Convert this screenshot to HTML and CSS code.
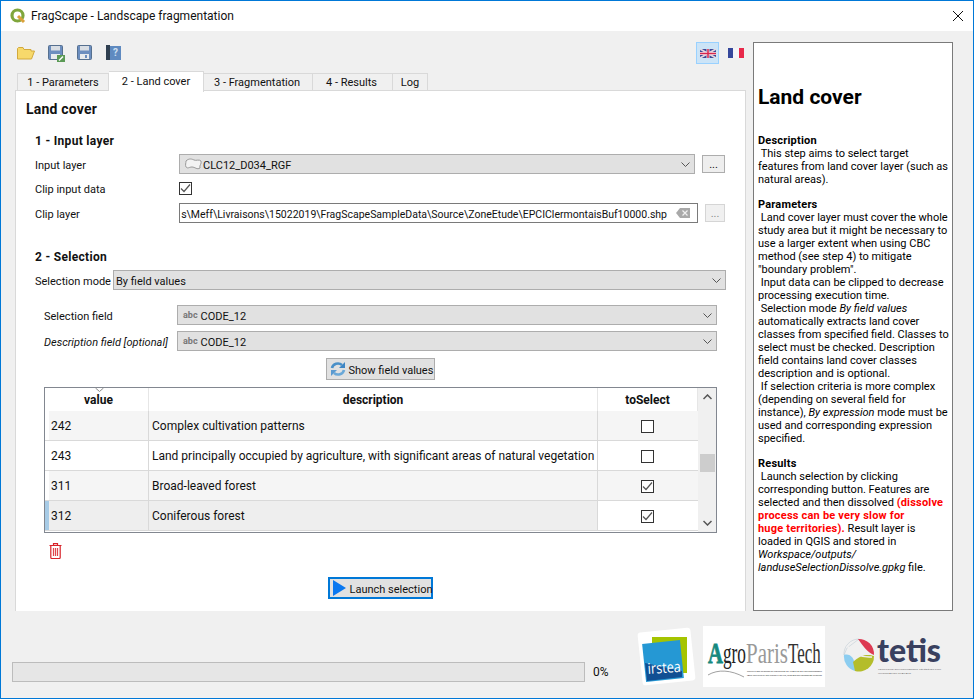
FILE: index.html
```html
<!DOCTYPE html>
<html>
<head>
    <title>FragScape - Landscape fragmentation</title>
    <link rel="stylesheet" href="styles.css">
</head>
<body>
    <div class="window">
        <div class="titlebar">
            <svg class="app-icon" width="16" height="16" viewBox="0 0 16 16">
                <circle cx="7.5" cy="7.5" r="5.500" fill="none" stroke="#7fa63c" stroke-width="3.200"/>
                <path d="M8 8l6 6" stroke="#d9a13b" stroke-width="3"/>
            </svg>
            <span class="title-text">FragScape - Landscape fragmentation</span>
            <svg class="close-icon" width="10" height="10" viewBox="0 0 10 10">
                <path d="M0 0L10 10M10 0L0 10" stroke="#111" stroke-width="1"/>
            </svg>
        </div>

        <div class="main">
            <div class="left">
                <div class="toolbar">
                    <svg class="tool-folder" width="18" height="14" viewBox="0 0 18 14">
                        <path d="M.5 2.5V13h14l3-8H14V3.5H7L6 1.500H1.500z" fill="#f7d96b" stroke="#d2a93d"/>
                    </svg>
                    <svg class="tool-save" width="17" height="17" viewBox="0 0 17 17">
                        <rect x="0.500" y="0.500" width="14" height="14" rx="1" fill="#6c8ebf" stroke="#56708f"/>
                        <rect x="3" y="1" width="9" height="4.500" fill="#d9dee4"/>
                        <rect x="3" y="9" width="9" height="5" fill="#e8ebee"/>
                        <rect x="9" y="10" width="8" height="7" fill="#5b9a55"/>
                        <path d="M11 15.500l4-4" stroke="#fff" stroke-width="1.500"/>
                    </svg>
                    <svg class="tool-save2" width="15" height="15" viewBox="0 0 15 15">
                        <rect x="0.500" y="0.500" width="14" height="14" rx="1" fill="#6c8ebf" stroke="#56708f"/>
                        <rect x="3" y="1" width="9" height="4.500" fill="#d9dee4"/>
                        <rect x="3" y="9" width="9" height="5" fill="#e8ebee"/>
                        <rect x="8" y="10" width="2" height="3" fill="#6c8ebf"/>
                    </svg>
                    <svg class="tool-help" width="15" height="15" viewBox="0 0 15 15">
                        <rect width="4" height="15" fill="#2f3f50"/>
                        <rect x="4" y="1" width="11" height="14" fill="#5f8ac0"/>
                        <text x="9.500" y="11" class="help-mark">?</text>
                    </svg>
                    <div class="lang-btn active">
                        <svg width="16" height="9" viewBox="0 0 16 9">
                            <rect width="16" height="9" fill="#3b4a96"/>
                            <path d="M0 0L16 9M16 0L0 9" stroke="#e8d6de" stroke-width="1.800"/>
                            <path d="M8 0V9M0 4.500H16" stroke="#f2e6ea" stroke-width="3"/>
                            <path d="M8 0V9M0 4.500H16" stroke="#d8274f" stroke-width="1.500"/>
                        </svg>
                    </div>
                    <div class="lang-btn">
                        <svg width="16" height="10" viewBox="0 0 16 10">
                            <rect width="5" height="10" fill="#35479b"/>
                            <rect x="5" width="6" height="10" fill="#f4f4f8"/>
                            <rect x="11" width="5" height="10" fill="#e8294a"/>
                        </svg>
                    </div>
                </div>

                <div class="tabs">
                    <div class="tab tab-1">1 - Parameters</div>
                    <div class="tab tab-2 selected">2 - Land cover</div>
                    <div class="tab tab-3">3 - Fragmentation</div>
                    <div class="tab tab-4">4 - Results</div>
                    <div class="tab tab-5">Log</div>
                </div>

                <div class="pane">
                    <div class="pane-title">Land cover</div>

                    <div class="section">
                        <div class="section-head head-1">1 - Input layer</div>
                        <div class="form-row row-input">
                            <label class="row-label">Input layer</label>
                            <div class="combo">
                                <svg class="poly-icon" width="17" height="13" viewBox="0 0 17 13">
                                    <path d="M1 3C4 0 7 1 9 2s5-1 7 1c1 3-2 4-1 7-3 2-5-1-8-1S3 11 1 9C0 7 1 5 1 3z" fill="#f3f3f3" stroke="#9a9a9a"/>
                                </svg>
                                <span>CLC12_D034_RGF</span>
                                <svg class="chevron" width="9" height="5" viewBox="0 0 9 5"><path d="M.5 .5l4 4 4-4" fill="none" stroke="#555"/></svg>
                            </div>
                            <div class="dots-btn">...</div>
                        </div>
                        <div class="form-row row-clip">
                            <label class="row-label">Clip input data</label>
                            <span class="checkbox">
                                <svg width="11" height="11" viewBox="0 0 11 11"><path d="M1 5.500l3 3 6-7" fill="none" stroke="#555" stroke-width="1.200"/></svg>
                            </span>
                        </div>
                        <div class="form-row row-layer">
                            <label class="row-label">Clip layer</label>
                            <div class="line-edit">
                                <span class="path-text">s\Meff\Livraisons\15022019\FragScapeSampleData\Source\ZoneEtude\EPCIClermontaisBuf10000.shp</span>
                                <svg class="clear-icon" width="14" height="10" viewBox="0 0 14 10">
                                    <path d="M4 0H14V10H4L0 5z" fill="#a9a9a9"/>
                                    <path d="M6.500 2.500l5 5M11.500 2.500l-5 5" stroke="#f0f0f0" stroke-width="1.200"/>
                                </svg>
                            </div>
                            <div class="dots-btn dots-small">...</div>
                        </div>

                        <div class="section-head head-2">2 - Selection</div>
                        <div class="form-row row-mode">
                            <label class="mode-label">Selection mode</label>
                            <div class="combo">
                                <span>By field values</span>
                                <svg class="chevron" width="9" height="5" viewBox="0 0 9 5"><path d="M.5 .5l4 4 4-4" fill="none" stroke="#555"/></svg>
                            </div>
                        </div>
                    </div>

                    <div class="fields">
                        <div class="form-row row-field">
                            <label class="field-label">Selection field</label>
                            <div class="combo">
                                <span class="abc">abc</span>
                                <span>CODE_12</span>
                                <svg class="chevron" width="9" height="5" viewBox="0 0 9 5"><path d="M.5 .5l4 4 4-4" fill="none" stroke="#555"/></svg>
                            </div>
                        </div>
                        <div class="form-row row-desc">
                            <label class="field-label optional">Description field [optional]</label>
                            <div class="combo">
                                <span class="abc">abc</span>
                                <span>CODE_12</span>
                                <svg class="chevron" width="9" height="5" viewBox="0 0 9 5"><path d="M.5 .5l4 4 4-4" fill="none" stroke="#555"/></svg>
                            </div>
                        </div>
                        <div class="show-row">
                            <div class="btn show-btn">
                                <svg width="16" height="16" viewBox="0 0 16 16">
                                    <path d="M2 7a6 5.500 0 0 1 10-3" fill="none" stroke="#4a90c8" stroke-width="2.600"/>
                                    <path d="M15 1v6H9z" fill="#3f86c4"/>
                                    <path d="M14 9a6 5.500 0 0 1-10 3" fill="none" stroke="#6aa8d8" stroke-width="2.600"/>
                                    <path d="M1 15V9h6z" fill="#5a9ad0"/>
                                </svg>
                                <span>Show field values</span>
                            </div>
                        </div>

                        <div class="table-wrap">
                            <table class="values">
                                <colgroup>
                                    <col class="col-head">
                                    <col class="col-value">
                                    <col class="col-desc">
                                    <col class="col-check">
                                </colgroup>
                                <thead>
                                    <tr>
                                        <th class="row-head"></th>
                                        <th class="sorted">
                                            <svg class="sort-mark" width="9" height="4" viewBox="0 0 9 4"><path d="M.5 0l4 3.500 4-3.500" fill="none" stroke="#888"/></svg>
                                            value
                                        </th>
                                        <th>description</th>
                                        <th>toSelect</th>
                                    </tr>
                                </thead>
                                <tbody>
                                    <tr class="alt">
                                        <td class="row-head"></td>
                                        <td class="value-cell">242</td>
                                        <td>Complex cultivation patterns</td>
                                        <td class="check-cell"><span class="checkbox"></span></td>
                                    </tr>
                                    <tr>
                                        <td class="row-head"></td>
                                        <td class="value-cell">243</td>
                                        <td>Land principally occupied by agriculture, with significant areas of natural vegetation</td>
                                        <td class="check-cell"><span class="checkbox"></span></td>
                                    </tr>
                                    <tr class="alt">
                                        <td class="row-head"></td>
                                        <td class="value-cell">311</td>
                                        <td>Broad-leaved forest</td>
                                        <td class="check-cell"><span class="checkbox"><svg width="11" height="11" viewBox="0 0 11 11"><path d="M1 5.500l3 3 6-7" fill="none" stroke="#555" stroke-width="1.200"/></svg></span></td>
                                    </tr>
                                    <tr class="current">
                                        <td class="row-head"></td>
                                        <td class="value-cell current-cell">312</td>
                                        <td class="current-cell">Coniferous forest</td>
                                        <td class="check-cell"><span class="checkbox"><svg width="11" height="11" viewBox="0 0 11 11"><path d="M1 5.500l3 3 6-7" fill="none" stroke="#555" stroke-width="1.200"/></svg></span></td>
                                    </tr>
                                </tbody>
                            </table>
                            <div class="scrollbar">
                                <svg class="scroll-up" width="9" height="6" viewBox="0 0 9 6"><path d="M.5 5l4-4 4 4" fill="none" stroke="#555" stroke-width="1.500"/></svg>
                                <div class="scroll-thumb"></div>
                                <svg class="scroll-down" width="9" height="6" viewBox="0 0 9 6"><path d="M.5 1l4 4 4-4" fill="none" stroke="#555" stroke-width="1.500"/></svg>
                            </div>
                        </div>

                        <svg class="trash" width="13" height="16" viewBox="0 0 13 16">
                            <path d="M4.500 2V.700h4V2M.5 2.500h12M1.800 3v11.500a1 1 0 0 0 1 1h7.400a1 1 0 0 0 1-1V3" fill="none" stroke="#d8232a" stroke-width="1.200"/>
                            <path d="M4.500 5v8M6.500 5v8M8.500 5v8" stroke="#e0474c" stroke-width="1.200"/>
                        </svg>
                    </div>

                    <div class="launch-row">
                        <div class="launch-btn">
                            <svg width="13" height="16" viewBox="0 0 13 16"><path d="M0 0L13 8L0 16z" fill="#0a78f0"/></svg>
                            <span>Launch selection</span>
                        </div>
                    </div>
                </div>
            </div>

            <div class="help">
                <h1>Land cover</h1>
                <p><b>Description</b><br>
                &nbsp;This step aims to select target<br>
                features from land cover layer (such as<br>
                natural areas).</p>
                <p><b>Parameters</b><br>
                &nbsp;Land cover layer must cover the whole<br>
                study area but it might be necessary to<br>
                use a larger extent when using CBC<br>
                method (see step 4) to mitigate<br>
                "boundary problem".<br>
                &nbsp;Input data can be clipped to decrease<br>
                processing execution time.<br>
                &nbsp;Selection mode <i>By field values</i><br>
                automatically extracts land cover<br>
                classes from specified field. Classes to<br>
                select must be checked. Description<br>
                field contains land cover classes<br>
                description and is optional.<br>
                &nbsp;If selection criteria is more complex<br>
                (depending on several field for<br>
                instance), <i>By expression</i> mode must be<br>
                used and corresponding expression<br>
                specified.</p>
                <p><b>Results</b><br>
                &nbsp;Launch selection by clicking<br>
                corresponding button. Features are<br>
                selected and then dissolved <b class="warn">(dissolve<br>
                process can be very slow for<br>
                huge territories).</b> Result layer is<br>
                loaded in QGIS and stored in<br>
                <i>Workspace/outputs/<br>
                landuseSelectionDissolve.gpkg</i> file.</p>
            </div>
        </div>

        <div class="footer">
            <div class="progress-group">
                <div class="progress"></div>
                <span class="percent">0%</span>
            </div>
            <div class="logos">
                <svg class="logo-irstea" width="61" height="61" viewBox="0 0 61 61">
                    <rect x="4" y="4" width="53" height="53" rx="3" fill="#fff" transform="rotate(-6 30.500 30.500)"/>
                    <rect x="16" y="11" width="35" height="36" fill="#a5c400"/>
                    <rect x="8" y="16" width="38" height="38" fill="#2598d4" transform="rotate(-6 27 35)"/>
                    <path d="M9 37L46 45L46 51L11 55z" fill="#114f93"/>
                    <text class="irstea-text" transform="translate(12 48) rotate(-4) scale(.85 1)">irstea</text>
                </svg>
                <svg class="logo-agro" width="122" height="61" viewBox="0 0 122 61">
                    <rect width="122" height="61" fill="#fff"/>
                    <text class="agro-a" transform="translate(5 37) scale(.69 1)">A</text>
                    <text class="agro-word" transform="translate(20 37) scale(.575 1)">gro</text>
                    <text class="agro-paris" transform="translate(43 37) scale(.7 1)">Paris</text>
                    <text class="agro-tech" transform="translate(85 37) scale(.567 1)">Tech</text>
                    <path d="M5 49C15 43 28 44 41 51" fill="none" stroke="#777" stroke-width=".7"/>
                    <text x="44" y="46" class="agro-small" textLength="75" lengthAdjust="spacingAndGlyphs">INSTITUT DES SCIENCES ET INDUSTRIES DU VIVANT ET DE L'ENVIRONNEMENT</text>
                    <text x="44" y="50" class="agro-small" textLength="75" lengthAdjust="spacingAndGlyphs">PARIS INSTITUTE OF TECHNOLOGY FOR LIFE, FOOD AND ENVIRONMENTAL SCIENCES</text>
                </svg>
                <svg class="logo-tetis" width="100" height="61" viewBox="0 0 100 61">
                    <path d="M1 29A15 15 0 0 1 16 13L4 22z" fill="#f0f0f0" stroke="#b9c7d0" stroke-width=".5"/>
                    <path d="M15 13A15 15 0 0 1 31 29C24 26 20 20 15 13z" fill="#dd3a52"/>
                    <path d="M1 29C7 27 13 32 12 45A15 15 0 0 1 1 29z" fill="#8ccdf0"/>
                    <path d="M10 36C18 28 26 28 31 30A15 15 0 0 1 12 45z" fill="#b4bd2a"/>
                    <path d="M4 20C9 26 17 32 29 31" fill="none" stroke="#f0f0f0" stroke-width="1.500"/>
                    <text x="34" y="36" class="tetis-word">tetis</text>
                    <text x="35" y="44" class="tetis-small" textLength="63" lengthAdjust="spacingAndGlyphs">TERRITOIRE ENVIRONNEMENT TÉLÉDÉTECTION</text>
                    <text x="35" y="48" class="tetis-small" textLength="33" lengthAdjust="spacingAndGlyphs">INFORMATION SPATIALE</text>
                </svg>
            </div>
        </div>
    </div>
</body>
</html>
```

FILE: styles.css
```css
* {
    box-sizing: border-box;
}

body {
    margin: 0;
    padding: 0;
    background: #f0f0f0;
    font-family: Roboto, "Noto Sans", sans-serif;
    font-size: 11px;
    color: #111;
}

svg {
    display: block;
    flex-shrink: 0;
}

.window {
    width: 974px;
    height: 699px;
    border: 1px solid #0078d7;
    background: #f0f0f0;
    overflow: hidden;
}

/* title bar */
.titlebar {
    height: 30px;
    background: #fff;
    display: flex;
    align-items: center;
    padding: 0 10px 0 9px;
}

.title-text {
    margin-left: 5px;
    font-size: 12px;
}

.close-icon {
    margin-left: auto;
}

.main {
    display: flex;
    height: 580px;
    padding: 11px 0 0 14px;
}

.left {
    width: 731px;
}

/* toolbar */
.toolbar {
    height: 29px;
    display: flex;
    align-items: flex-start;
}

.tool-folder {
    margin: 4px 0 0 2px;
}

.tool-save {
    margin: 3px 0 0 13px;
}

.tool-save2 {
    margin: 3px 0 0 12px;
}

.tool-help {
    margin: 3px 0 0 14px;
}

.help-mark {
    font-size: 10px;
    font-weight: bold;
    fill: #cfe0f2;
    text-anchor: middle;
}

.lang-btn {
    width: 24px;
    height: 22px;
    display: flex;
    align-items: center;
    justify-content: center;
    border: 1px solid transparent;
}

.lang-btn.active {
    width: 23px;
    margin-left: auto;
    background: #cce4f7;
    border-color: #99d1ff;
}

.lang-btn:last-child {
    margin-right: -2px;
    margin-left: 5px;
}

/* tabs */
.tabs {
    display: flex;
    align-items: flex-end;
    height: 20px;
    padding-left: 2px;
    position: relative;
    z-index: 1;
}

.tab {
    height: 18px;
    border: 1px solid #d9d9d9;
    border-left: 0;
    background: #f0f0f0;
    display: flex;
    align-items: center;
    justify-content: center;
    font-size: 11px;
}

.tab-1 {
    width: 92px;
    border-left: 1px solid #d9d9d9;
}

.tab-2 {
    width: 95px;
}

.tab-3 {
    width: 109px;
    padding-right: 2px;
}

.tab-4 {
    width: 80px;
    padding-right: 2px;
}

.tab-5 {
    width: 35px;
}

.tab.selected {
    height: 21px;
    background: #fff;
    border-bottom: 0;
    margin-bottom: -1px;
    padding-bottom: 2px;
}

/* main pane */
.pane {
    height: 521px;
    margin-top: -1px;
    background: #fff;
    border: 1px solid #d9d9d9;
    border-bottom: 0;
    padding: 9px 0 0 10px;
}

.pane-title {
    height: 18px;
    line-height: 18px;
    font-size: 14px;
    letter-spacing: .2px;
    font-weight: bold;
}

.section {
    padding: 0 19px 0 9px;
}

.section-head {
    height: 14px;
    line-height: 14px;
    font-size: 12px;
    letter-spacing: .3px;
    font-weight: bold;
}

.head-1 {
    margin-top: 16px;
}

.head-2 {
    margin-top: 27px;
}

.form-row {
    display: flex;
    align-items: center;
    height: 20px;
}

.form-row label,
.combo span {
    padding-top: 2px;
}

.row-input {
    margin-top: 6px;
}

.row-clip {
    margin-top: 5px;
}

.form-row.row-clip label {
    padding-top: 0;
}

.row-layer {
    margin-top: 4px;
}

.row-mode {
    margin-top: 6px;
}

.row-label {
    width: 144px;
    flex-shrink: 0;
}

.mode-label {
    width: 78px;
    flex-shrink: 0;
    white-space: nowrap;
}

.combo {
    flex: 1;
    height: 20px;
    background: #e1e1e1;
    border: 1px solid #adadad;
    display: flex;
    align-items: center;
    padding: 0 4px 0 2px;
    min-width: 0;
}

.chevron {
    margin-left: auto;
}

.poly-icon {
    margin: 0 1px 0 3px;
}

.dots-btn {
    width: 23px;
    height: 18px;
    margin: 0 1px 0 7px;
    background: #eeeeee;
    border: 1px solid #adadad;
    display: flex;
    align-items: center;
    justify-content: center;
    flex-shrink: 0;
}

.dots-small {
    width: 20px;
    border-color: #d5d5d5;
    background: #f0f0f0;
    color: #888;
}

.checkbox {
    width: 13px;
    height: 13px;
    background: #fff;
    border: 1px solid #333;
    display: inline-flex;
    align-items: center;
    justify-content: center;
    vertical-align: middle;
}

.row-clip .checkbox {
    margin-top: -1px;
}

.line-edit {
    flex: 1;
    height: 20px;
    border: 1px solid #7a7a7a;
    background: #fff;
    display: flex;
    justify-content: flex-end;
    align-items: center;
    overflow: hidden;
    padding-right: 7px;
    min-width: 0;
}

.path-text {
    flex-shrink: 0;
    white-space: nowrap;
    font-size: 10.500px;
    padding-top: 2px;
}

.clear-icon {
    margin-left: 9px;
}

/* field selection */
.fields {
    padding: 0 28px 0 18px;
}

.field-label {
    width: 133px;
    flex-shrink: 0;
}

.optional {
    font-style: italic;
    white-space: nowrap;
}

.row-field {
    margin-top: 15px;
}

.row-desc {
    margin-top: 6px;
}

.combo span.abc {
    margin: 0 3px 0 3px;
    padding-top: 0;
    font-size: 9px;
    font-weight: bold;
    color: #777;
}

.show-row {
    display: flex;
    justify-content: center;
    margin-top: 7px;
}

.btn {
    display: flex;
    align-items: center;
    background: #e1e1e1;
    border: 1px solid #adadad;
    white-space: nowrap;
}

.show-btn {
    width: 109px;
    height: 22px;
    gap: 3px;
    padding-left: 3px;
    margin-left: -1px;
}

.show-btn span,
.launch-btn span {
    padding-top: 2px;
}

/* values table */
.table-wrap {
    height: 146px;
    margin-top: 7px;
    border: 1px solid #828790;
    display: flex;
    overflow: hidden;
}

.values {
    width: 653px;
    table-layout: fixed;
    border-collapse: separate;
    border-spacing: 0;
    flex-shrink: 0;
    align-self: flex-start;
    font-size: 12px;
}

.col-head {
    width: 4px;
}

.col-value {
    width: 100px;
}

.col-desc {
    width: 449px;
}

.col-check {
    width: 100px;
}

.values th {
    height: 23px;
    padding: 0;
    position: relative;
    font-weight: bold;
    background: #fff;
    border-right: 1px solid #e6e6e6;
}

.values td {
    height: 30px;
    padding: 0 0 0 3px;
    border-right: 1px solid #d9d9d9;
    border-bottom: 1px solid #d9d9d9;
    background: #fff;
    white-space: nowrap;
    overflow: hidden;
}

.values tr.alt td {
    background: #f5f5f5;
}

.values td.value-cell {
    padding-left: 2px;
}

.values .row-head {
    padding: 0;
    background: #fff;
    border-right: 0;
}

.values tr.alt .row-head {
    background: #fff;
}

.values tr.current .row-head {
    background: #a7cbe6;
}

.values td.current-cell {
    background: #eeeeee;
}

.values td.check-cell {
    padding: 0 1px 0 0;
    text-align: center;
    border-right: 0;
}

.sort-mark {
    position: absolute;
    top: 0;
    left: 46px;
}

.scrollbar {
    flex: 1;
    background: #f0f0f0;
    display: flex;
    flex-direction: column;
    align-items: center;
}

.scroll-up {
    margin-top: 6px;
}

.scroll-thumb {
    width: 15px;
    height: 18px;
    margin-top: 54px;
    background: #cdcdcd;
}

.scroll-down {
    margin-top: auto;
    margin-bottom: 6px;
}

.trash {
    margin: 10px 0 0 5px;
}

.launch-row {
    display: flex;
    justify-content: center;
    margin-top: 18px;
    padding-right: 11px;
}

.launch-btn {
    width: 105px;
    height: 22px;
    background: #e1e1e1;
    border: 2px solid #0078d7;
    display: flex;
    align-items: center;
    gap: 4px;
    padding-left: 3px;
    white-space: nowrap;
}

/* help panel */
.help {
    width: 200px;
    height: 569px;
    margin-left: 7px;
    border: 1px solid #7a7a7a;
    background: #fff;
    padding: 42px 0 0 4px;
    color: #000;
    line-height: 13px;
    white-space: nowrap;
}

.help h1 {
    height: 24px;
    line-height: 24px;
    margin: 0 0 25px;
    font-size: 21px;
    font-weight: bold;
}

.help p {
    margin: 0 0 12px;
}

.help b {
    letter-spacing: .2px;
}

.warn {
    color: #f00;
}

/* footer */
.footer {
    display: flex;
    height: 87px;
    padding: 15px 0 0 11px;
}

.progress-group {
    width: 599px;
    margin-top: 36px;
    height: 20px;
    display: flex;
    align-items: center;
}

.progress {
    width: 573px;
    height: 20px;
    background: #e6e6e6;
    border: 1px solid #bcbcbc;
}

.percent {
    margin-left: 8px;
    font-size: 12px;
}

.logos {
    display: flex;
    margin-left: 25px;
}

.logo-agro {
    margin-left: 6px;
}

.logo-tetis {
    margin-left: 18px;
}

.irstea-text {
    font-family: "Open Sans", sans-serif;
    font-size: 15px;
    fill: #fff;
}

.agro-a,
.agro-word,
.agro-paris,
.agro-tech {
    font-family: "Liberation Serif", serif;
    font-size: 30px;
}

.agro-a {
    font-weight: bold;
    fill: #16897f;
    stroke: #16897f;
    stroke-width: .8px;
}

.agro-word {
    fill: #222;
}

.agro-paris {
    fill: #999;
}

.agro-tech {
    fill: #333;
}

.agro-small {
    font-size: 1.800px;
    fill: #333;
}

.tetis-word {
    font-family: Lato, sans-serif;
    font-weight: 900;
    font-size: 32px;
    fill: #39405f;
}

.tetis-small {
    font-size: 2.500px;
    fill: #777;
}
```
